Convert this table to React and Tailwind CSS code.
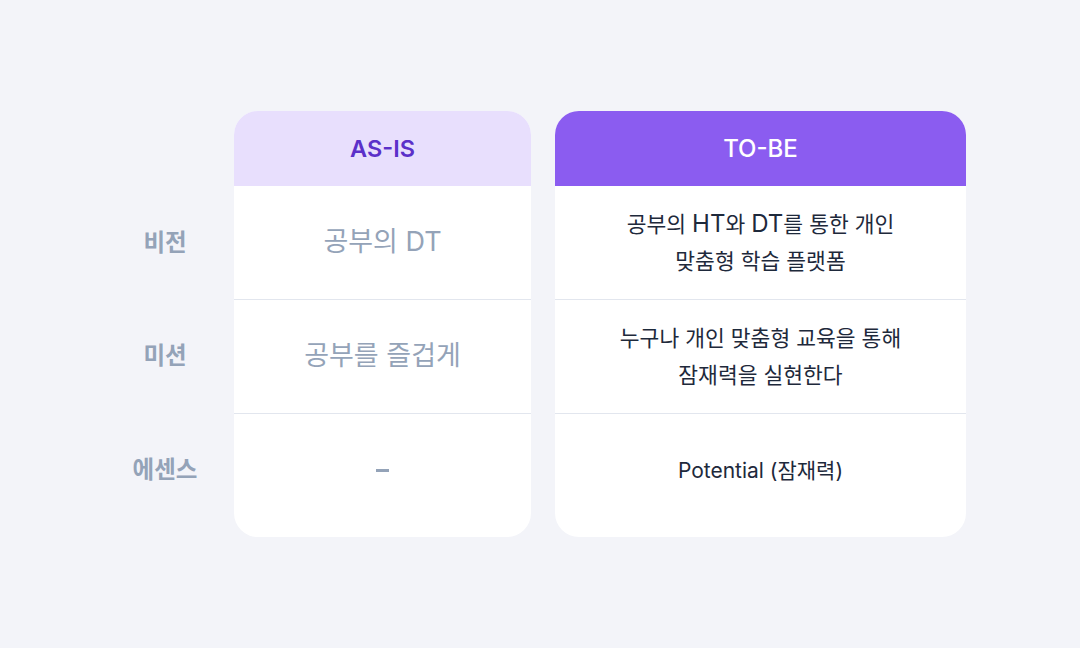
export default function App() {
  const font = { fontFamily: "Inter, 'Noto Sans CJK KR', sans-serif" };
  const labels = ["비전", "미션", "에센스"];
  const asis = ["공부의 DT", "공부를 즐겁게", "–"];
  const L = ({ children }) => <span className="text-[24px]">{children}</span>;
  const tobe = [
    [<>공부의 <L>HT</L>와 <L>DT</L>를 통한 개인</>, "맞춤형 학습 플랫폼"],
    ["누구나 개인 맞춤형 교육을 통해", "잠재력을 실현한다"],
    ["Potential (잠재력)"],
  ];
  const rowCls = ["h-[113px]", "h-[114px] border-t border-[#e2e6ee]", "h-[124px] pb-[10px] border-t border-[#e2e6ee]"];
  const labelCls = ["h-[113px]", "h-[114px]", "h-[124px] pb-[10px]"];
  return (
    <div className="w-[1080px] h-[648px] bg-[#f3f4f9] flex items-center justify-center pl-[2px]" style={font}>
      <div className="flex">
        <div className="w-[98px] mr-[20px] pt-[75px] flex flex-col">
          {labels.map((l, i) => (
            <div key={i} className={`${labelCls[i]} flex items-center justify-center text-[23.5px] font-bold text-[#94a3b8]`}>
              {l}
            </div>
          ))}
        </div>
        <div className="w-[297px] mr-[24px] bg-white rounded-[24px] overflow-hidden flex flex-col">
          <div className="h-[75px] bg-[#e8dffd] flex items-center justify-center text-[23.5px] font-semibold text-[#5b30c9]">
            AS-IS
          </div>
          {asis.map((t, i) => (
            <div key={i} className={`${rowCls[i]} flex items-center justify-center`}>
              {i === 2 ? (
                <div className="w-[13px] h-[3px] bg-[#94a3b8]" />
              ) : (
                <span className="text-[27px] text-[#94a3b8]">{t}</span>
              )}
            </div>
          ))}
        </div>
        <div className="w-[411px] bg-white rounded-[24px] overflow-hidden flex flex-col">
          <div className="h-[75px] bg-[#8b5cf0] flex items-center justify-center text-[24px] font-medium text-white">
            TO-BE
          </div>
          {tobe.map((lines, i) => (
            <div key={i} className={`${rowCls[i]} flex flex-col items-center justify-center text-[#1e293b] leading-[37px] ${i === 2 ? "text-[21px]" : "text-[21.5px]"}`}>
              {lines.map((l, j) => (
                <div key={j}>{l}</div>
              ))}
            </div>
          ))}
        </div>
      </div>
    </div>
  );
}
